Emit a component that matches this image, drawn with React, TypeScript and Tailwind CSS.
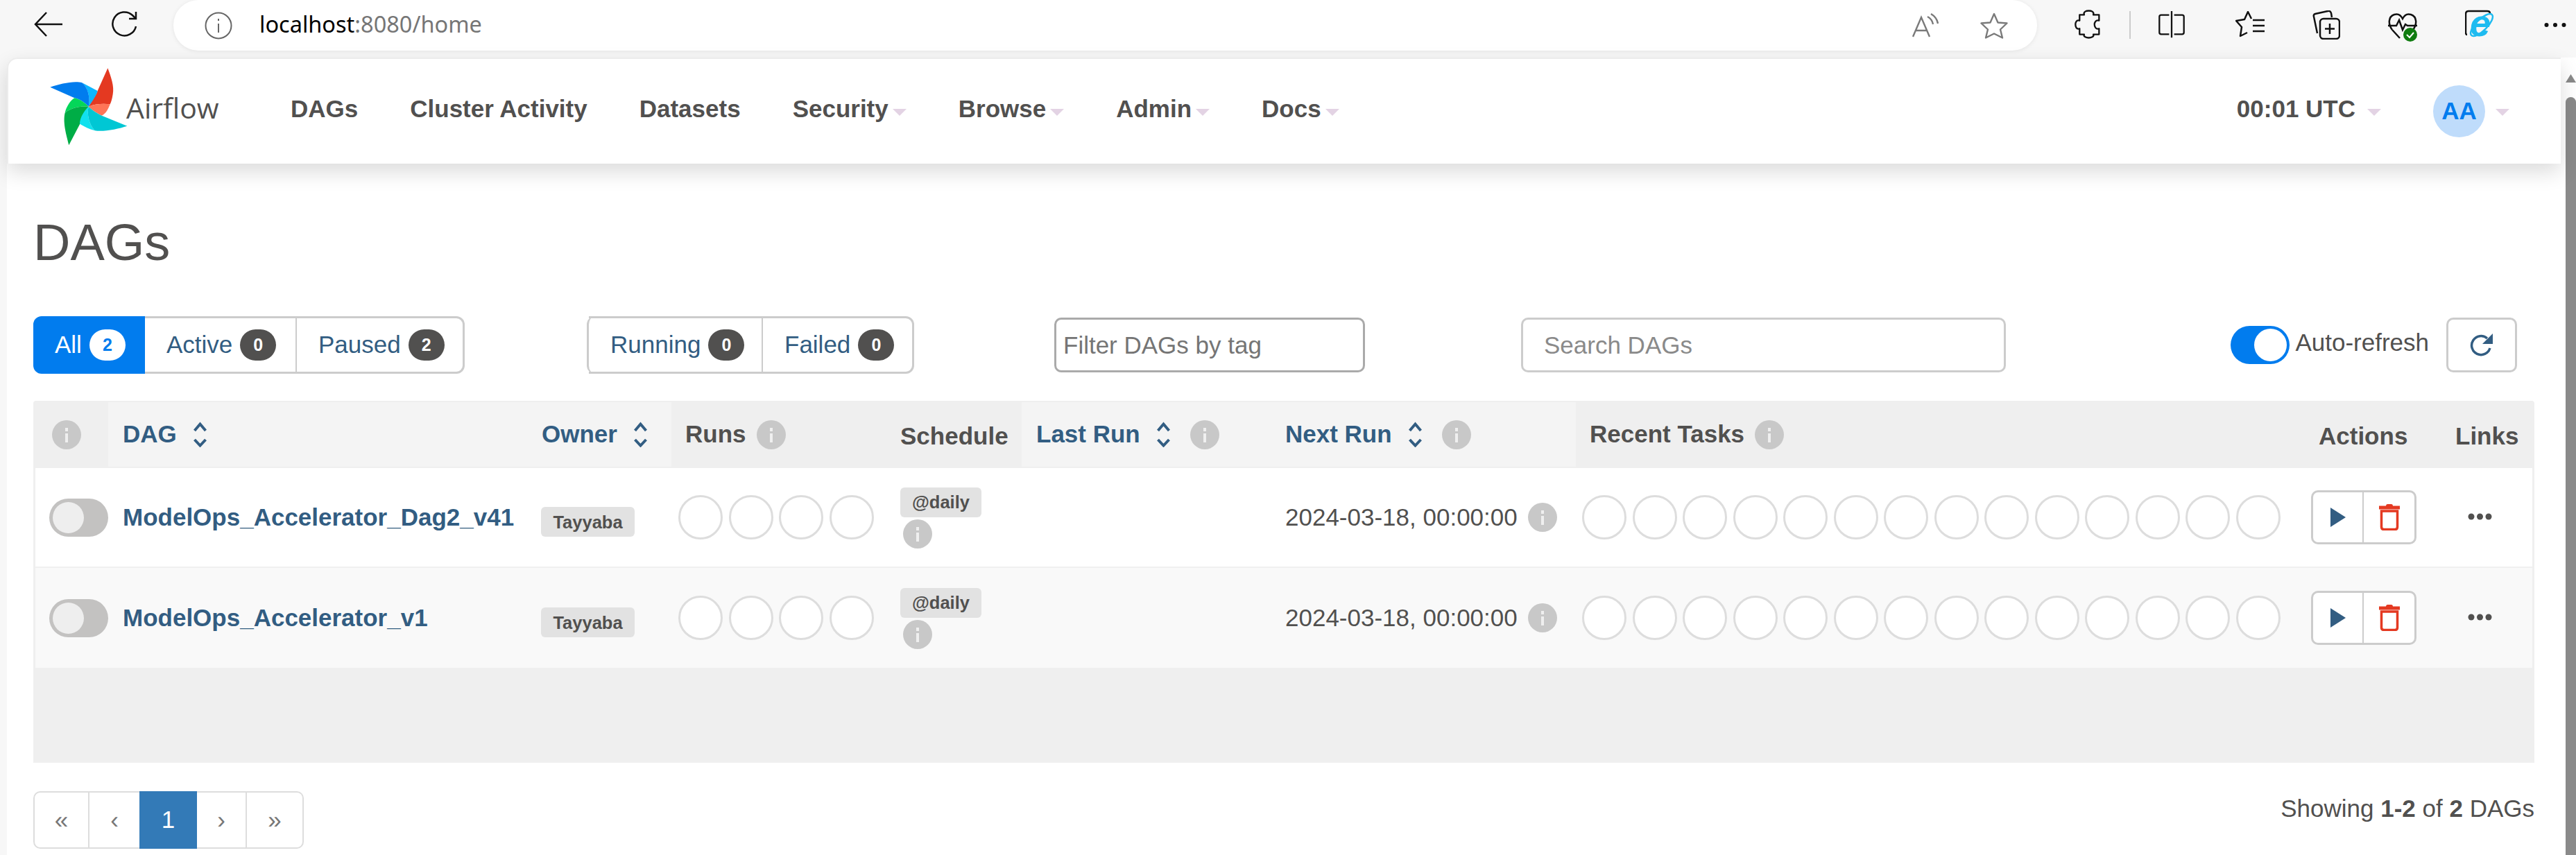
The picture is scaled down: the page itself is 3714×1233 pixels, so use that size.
import { ReactNode } from 'react';

const linkBlue = '#325d82';

// column widths, shared by the header and the rows
const col = {
  check: 'w-[105px]',
  dag: 'w-[604px]',
  owner: 'w-[208px]',
  runs: 'w-[310px]',
  schedule: 'w-[195px]',
  lastRun: 'w-[359px]',
  nextRun: 'w-[440px]',
  recent: 'w-[1051px]',
  actions: 'w-[197px]',
  links: 'w-[131px]',
};

const dags = [
  { name: 'ModelOps_Accelerator_Dag2_v41', rowClass: 'bg-white border-b-2 border-[#f0f0f0] h-[144px]' },
  { name: 'ModelOps_Accelerator_v1', rowClass: 'bg-[#f9f9f9] h-[144px]' },
];

function Caret({ className = '' }: { className?: string }) {
  return (
    <svg width="20" height="10" viewBox="0 0 20 10" className={className}>
      <polygon points="0,0 20,0 10,10" fill="#e3d3e4" />
    </svg>
  );
}

function InfoDot() {
  return (
    <svg width="42" height="42" viewBox="0 0 42 42" className="shrink-0">
      <circle cx="21" cy="21" r="21" fill="#c8c8c8" />
      <rect x="19" y="11" width="4" height="5" fill="#efefef" />
      <rect x="19" y="19" width="4" height="13" fill="#efefef" />
    </svg>
  );
}

function SortIcon() {
  return (
    <svg width="19" height="37" viewBox="0 0 19 37" fill="none" stroke={linkBlue} strokeWidth="4" className="shrink-0">
      <path d="M1.5 13 9.5 3.5l8 9.5" />
      <path d="M1.5 26l8 8.5 8-8.5" />
    </svg>
  );
}

function Logo() {
  return (
    <svg width="115" height="115" viewBox="210 45 345 345" className="shrink-0 mt-[-14px]">
      <path d="M383 218C400 190 420 160 422 150L466 52C480 90 495 130 488 165C485 185 480 200 476 208C450 205 415 205 383 218Z" fill="#e43921" />
      <path d="M383 218C415 205 450 205 476 208C470 225 458 250 440 257C425 250 400 235 383 218Z" fill="#ff7557" />
      <path d="M355 115L422 150C420 165 400 195 383 218C390 180 382 140 355 115Z" fill="#0cb6ff" />
      <path d="M217 134C260 120 320 105 355 115C380 135 392 180 383 218C365 200 345 185 322 181Z" fill="#017cee" />
      <path d="M322 181C345 185 365 200 383 218C355 215 310 220 281 245C285 225 300 195 322 181Z" fill="#04d659" />
      <path d="M281 245C310 220 355 215 383 218C370 240 350 270 345 295L298 385C290 350 270 290 281 245Z" fill="#00ad46" />
      <path d="M383 218C375 250 385 295 410 322C385 315 365 305 345 293C345 265 365 235 383 218Z" fill="#11e1ee" />
      <path d="M383 218C375 250 385 295 410 322C450 328 510 315 550 302L440 257C425 250 400 235 383 218Z" fill="#00c7d4" />
    </svg>
  );
}

function BrowserBar() {
  return (
    <div className="h-[83px] shrink-0 flex items-start pl-[49px]">
      <svg width="41" height="36" viewBox="0 0 41 36" fill="none" stroke="#111" strokeWidth="2.5" className="mt-[17px] shrink-0">
        <path d="M41 18H2M18 1 2 18l16 17" />
      </svg>
      <svg width="40" height="40" viewBox="0 0 40 40" fill="none" stroke="#111" strokeWidth="2.5" className="mt-[15px] ml-[70px] shrink-0">
        <path d="M36 23A17 17 0 1 1 31 7L36 12" />
        <path d="M36 2V12H26" />
      </svg>
      <div className="ml-[50px] w-[2687px] h-[73px] bg-white rounded-[36px] shadow-[0_1px_6px_rgba(0,0,0,0.08)] flex items-center pl-[45px] shrink-0">
        <svg width="40" height="40" viewBox="0 0 40 40" fill="none" stroke="#666" strokeWidth="2" className="shrink-0">
          <circle cx="20" cy="20" r="18.5" />
          <path d="M20 17V30M20 10V13" />
        </svg>
        <span className="ml-[39px] mt-[-3px] text-[32.5px] leading-none font-['Noto_Sans',sans-serif] text-black">
          localhost<span className="text-[#767676]">:8080/home</span>
        </span>
        <svg width="38" height="36" viewBox="0 0 38 36" fill="none" stroke="#7a7a7a" strokeWidth="2.4" className="ml-auto shrink-0">
          <path d="M1 34 13 6l12 28M5 25H21" />
          <path d="M22 5c4 2 7 6 8 11M27 1c5 3 9 8 10 14" />
        </svg>
        <svg width="40" height="38" viewBox="0 0 40 38" fill="none" stroke="#7a7a7a" strokeWidth="2.4" strokeLinejoin="round" className="ml-[60px] mr-[42px] shrink-0">
          <path d="M20 2l5.5 12.5L38.500 15.500 29 24.500 32 36.500 20 30.500 8 36.500 11 24.500 1.500 15.500 14.500 14.500Z" />
        </svg>
      </div>
      {/* extensions */}
      <svg width="37" height="42" viewBox="748 43 112 126" fill="none" stroke="#111" strokeWidth="7" strokeLinejoin="round" className="mt-[14px] ml-[54px] shrink-0">
        <path d="M770 65H790C785 50 800 47 810 47C820 47 835 50 830 65H855V90C840 85 835 100 835 107C835 115 840 130 855 125V150H830C835 160 820 165 810 165C800 165 785 160 790 150H770V125C755 130 752 115 752 107C752 100 755 85 770 90Z" />
      </svg>
      <div className="mt-[16px] ml-[42px] w-[2px] h-[40px] bg-[#cccccc] shrink-0" />
      <svg width="38" height="42" viewBox="1108 45 116 122" fill="none" stroke="#111" strokeWidth="7" className="mt-[14px] ml-[40px] shrink-0">
        <path d="M1155 65H1120Q1112 65 1112 73V142Q1112 150 1120 150H1155M1177 65H1212Q1220 65 1220 73V142Q1220 150 1212 150H1177M1166 48V165" />
      </svg>
      <svg width="42" height="38" viewBox="0 0 42 38" fill="none" stroke="#111" strokeWidth="2.500" strokeLinejoin="round" className="mt-[16px] ml-[73px] shrink-0">
        <path d="M23 11 18 1 13 12 1 14 9 23 7 36 17 31" />
        <path d="M25 13H42M25 21H42M25 29H42" />
      </svg>
      <svg width="41" height="42" viewBox="0 0 41 42" fill="none" stroke="#111" strokeWidth="2.500" className="mt-[15px] ml-[68px] shrink-0">
        <path d="M8 33 3 9Q2 6 5 5L23 1Q27 0 28 4L29 10" />
        <rect x="12" y="12" width="28" height="29" rx="5" />
        <path d="M26 19V34M19 26.500H33" />
      </svg>
      <svg width="42" height="42" viewBox="0 0 42 42" fill="none" className="mt-[18px] ml-[69px] shrink-0">
        <path d="M6 25C0 17 0 6 9 3C15 1 19 5 21 9C23 5 27 1 33 3C42 6 42 17 36 25L28 32" stroke="#111" strokeWidth="2.500" />
        <path d="M0 19H12L16 11 21 25 25 17 28 19H42M6 25 17 37" stroke="#111" strokeWidth="2.500" />
        <circle cx="32" cy="32" r="10" fill="#107c10" />
        <path d="M27 32l4 4 6-7" stroke="#fff" strokeWidth="2" />
      </svg>
      <svg width="44" height="70" viewBox="0 -14 44 70" fill="none" className="ml-[69px] shrink-0">
        <path d="M3 36Q1 36 1 33V6Q1 2 5 2H32Q36 2 36 5" stroke="#111" strokeWidth="2.500" />
        <ellipse cx="24" cy="22" rx="21" ry="8" transform="rotate(-45 24 22)" stroke="#1ebbf0" strokeWidth="2.500" />
        <text x="7" y="38" fontSize="54" fontWeight="700" fontStyle="italic" fill="#1ebbf0" fontFamily="Liberation Sans, sans-serif">e</text>
      </svg>
      <svg width="32" height="8" viewBox="0 0 32 8" fill="#111" className="mt-[32px] ml-[70px] shrink-0">
        <circle cx="3.500" cy="4" r="3" />
        <circle cx="16" cy="4" r="3" />
        <circle cx="28.500" cy="4" r="3" />
      </svg>
    </div>
  );
}

function NavItem({ label, caret }: { label: string; caret?: boolean }) {
  return (
    <span className="flex items-center font-bold mb-[6px]">
      {label}
      {caret && <Caret className="ml-[6px] mt-[8px]" />}
    </span>
  );
}

function TopNav() {
  return (
    <nav className="relative z-10 h-[153px] mr-[7px] shrink-0 bg-white rounded-tl-[15px] border-t-2 border-l-2 border-[#ececec] shadow-[0_12px_30px_rgba(0,0,0,0.14)] flex items-center pl-[58px] pr-[74px] text-[35px] text-[#51504f]">
      <Logo />
      <span className="ml-[-3px] mt-[-10px] w-[135px] text-[41px] leading-none whitespace-nowrap font-['Open_Sans',sans-serif]">Airflow</span>
      <div className="ml-[102px] flex items-center gap-[75px]">
        <NavItem label="DAGs" />
        <NavItem label="Cluster Activity" />
        <NavItem label="Datasets" />
        <NavItem label="Security" caret />
        <NavItem label="Browse" caret />
        <NavItem label="Admin" caret />
        <NavItem label="Docs" caret />
      </div>
      <div className="ml-auto flex items-center">
        <NavItem label="00:01 UTC" />
        <Caret className="ml-[17px] mt-[3px]" />
        <span className="ml-[75px] w-[75px] h-[75px] rounded-full bg-[#bfdcfb] flex items-center justify-center text-[#017cee] font-bold">AA</span>
        <Caret className="ml-[15px] mt-[3px]" />
      </div>
    </nav>
  );
}

function FilterSegment({ label, count, width, active, last }: { label: string; count: number; width: string; active?: boolean; last?: boolean }) {
  const box = active ? 'bg-[#017cee] text-white rounded-l-[12px]' : 'text-[#325d82] border-y-[3px] border-[#cccccc]';
  return (
    <div className={`${width} h-[83px] flex items-center pl-[31px] gap-[11px] ${box} ${last ? 'border-r-[3px] rounded-r-[12px]' : active ? '' : 'border-r-2'}`}>
      <span>{label}</span>
      <span className={`w-[52px] h-[45px] rounded-full flex items-center justify-center text-[25px] font-bold ${active ? 'bg-white text-[#017cee]' : 'bg-[#51504f] text-white'}`}>
        {count}
      </span>
    </div>
  );
}

function Toolbar() {
  return (
    <div className="flex items-center h-[83px] text-[35px] pr-[25px]">
      <div className="flex">
        <FilterSegment label="All" count={2} width="w-[161px]" active />
        <FilterSegment label="Active" count={0} width="w-[219px]" />
        <FilterSegment label="Paused" count={2} width="w-[242px]" last />
      </div>
      <div className="flex ml-[176px] border-l-[3px] border-[#cccccc] rounded-l-[12px]">
        <FilterSegment label="Running" count={0} width="w-[251px]" />
        <FilterSegment label="Failed" count={0} width="w-[218px]" last />
      </div>
      <input
        placeholder="Filter DAGs by tag"
        className="ml-[202px] w-[448px] h-[79px] border-[3px] border-[#aaaaaa] rounded-[10px] pl-[10px] outline-none bg-white placeholder:text-[#757575]"
      />
      <input
        placeholder="Search DAGs"
        className="ml-[225px] w-[699px] h-[79px] border-[3px] border-[#cccccc] rounded-[10px] pl-[30px] outline-none bg-white placeholder:text-[#8a8a8a]"
      />
      <div className="ml-auto flex items-center">
        <div className="w-[85px] h-[55px] rounded-full bg-[#017cee] flex items-center justify-end pr-[4px]">
          <span className="w-[47px] h-[47px] rounded-full bg-white" />
        </div>
        <span className="ml-[8px] text-[#51504f] mt-[-6px]">Auto-refresh</span>
        <button className="ml-[25px] w-[102px] h-[79px] border-[3px] border-[#cccccc] rounded-[10px] bg-white flex items-center justify-center">
          <svg width="34" height="34" viewBox="0 0 34 34" fill="none">
            <path d="M29 21A13.500 13.500 0 1 1 25 7" stroke={linkBlue} strokeWidth="3.500" />
            <polygon points="33,0 33,15 18,15" fill={linkBlue} />
          </svg>
        </button>
      </div>
    </div>
  );
}

function SortHead({ label, width, info }: { label: string; width: string; info?: boolean }) {
  return (
    <div className={`${width} h-[93px] mt-[2px] bg-[#f4f4f4] flex items-center pl-[21px] text-[#325d82]`}>
      {label}
      <span className="ml-[24px] flex"><SortIcon /></span>
      {info && <span className="ml-[29px] flex"><InfoDot /></span>}
    </div>
  );
}

function PlainHead({ label, width, info }: { label: string; width: string; info?: boolean }) {
  return (
    <div className={`${width} flex items-center pl-[20px] ${info ? '' : 'pt-[5px]'}`}>
      {label}
      {info && <span className="ml-[15px] flex"><InfoDot /></span>}
    </div>
  );
}

function RunCircles({ count }: { count: number }) {
  return (
    <div className="flex gap-[8.5px]">
      {Array.from({ length: count }).map((_, i) => (
        <span key={i} className="w-[64px] h-[64px] rounded-full border-[3px] border-[#dddddd] bg-white shrink-0" />
      ))}
    </div>
  );
}

function DagRow({ name, rowClass }: { name: string; rowClass: string }) {
  return (
    <div className={`flex items-center ${rowClass}`}>
      <div className={`${col.check} pl-[20px]`}>
        <div className="w-[85px] h-[55px] rounded-full bg-[#c3c2c1] flex items-center pl-[5px]">
          <span className="w-[45px] h-[45px] rounded-full bg-[#eeeeee]" />
        </div>
      </div>
      <div className={`${col.dag} pl-[21px] font-bold text-[#325d82]`}>{name}</div>
      <div className={`${col.owner} pl-[20px] pt-[8px]`}>
        <span className="inline-flex items-center justify-center w-[135px] h-[43px] rounded-[6px] bg-[#e2e2e2] text-[25.5px] font-bold">Tayyaba</span>
      </div>
      <div className={`${col.runs} pl-[10px]`}>
        <RunCircles count={4} />
      </div>
      <div className={`${col.schedule} pl-[20px] pt-[1px] flex flex-col items-start gap-[3px]`}>
        <span className="inline-flex items-center justify-center w-[117px] h-[43px] rounded-[6px] bg-[#e2e2e2] text-[25.5px] font-bold">@daily</span>
        <span className="ml-[4px] flex"><InfoDot /></span>
      </div>
      <div className={col.lastRun} />
      <div className={`${col.nextRun} pl-[21px] flex items-center gap-[15px]`}>
        2024-03-18, 00:00:00
        <InfoDot />
      </div>
      <div className={`${col.recent} pl-[9px]`}>
        <RunCircles count={14} />
      </div>
      <div className={`${col.actions} pl-[9px]`}>
        <div className="w-[152px] h-[78px] flex rounded-[10px] border-[3px] border-[#cccccc] bg-white">
          <span className="w-[73px] border-r-2 border-[#cccccc] flex items-center justify-center">
            <svg width="22" height="28" viewBox="0 0 22 28"><polygon points="0,0 22,14 0,28" fill="#325d82" /></svg>
          </span>
          <span className="flex-1 flex items-center justify-center">
            <svg width="30" height="38" viewBox="0 0 30 38" fill="none">
              <path d="M10 2.500Q10 0 12 0H18Q20 0 20 2.500H30V7.500H0V2.500Z" fill="#e43921" />
              <path d="M3.500 10V33Q3.500 36.500 7 36.500H23Q26.500 36.500 26.500 33V10H3.500Z" stroke="#e43921" strokeWidth="3.500" />
            </svg>
          </span>
        </div>
      </div>
      <div className={`${col.links} pl-[38px]`}>
        <svg width="35" height="10" viewBox="0 0 35 10" fill="#51504f" className="mt-[-3px]">
          <circle cx="5" cy="5" r="4.500" />
          <circle cx="17.500" cy="5" r="4.500" />
          <circle cx="30" cy="5" r="4.500" />
        </svg>
      </div>
    </div>
  );
}

function DagTable() {
  return (
    <div className="mt-[39px] h-[522px] bg-[#efefef] border-x-[3px] border-[#efefef] rounded-t-[4px] text-[35px] text-[#51504f]">
      <div className="flex h-[97px] font-bold">
        <div className={`${col.check} flex items-center pl-[24px]`}><InfoDot /></div>
        <SortHead label="DAG" width={col.dag} />
        <SortHead label="Owner" width={col.owner} />
        <PlainHead label="Runs" width={col.runs} info />
        <PlainHead label="Schedule" width={col.schedule} />
        <SortHead label="Last Run" width={col.lastRun} info />
        <SortHead label="Next Run" width={col.nextRun} info />
        <PlainHead label="Recent Tasks" width={col.recent} info />
        <PlainHead label="Actions" width={col.actions} />
        <PlainHead label="Links" width={col.links} />
      </div>
      {dags.map((d) => (
        <DagRow key={d.name} name={d.name} rowClass={d.rowClass} />
      ))}
    </div>
  );
}

function PageCell({ children, className = '' }: { children: ReactNode; className?: string }) {
  return <span className={`h-[83px] flex items-center justify-center ${className}`}>{children}</span>;
}

function Pager() {
  return (
    <div className="flex text-[35px] text-[#777777]">
      <PageCell className="w-[81px] border-2 border-[#dddddd] rounded-l-[10px]">«</PageCell>
      <PageCell className="w-[72px] border-y-2 border-[#dddddd]">‹</PageCell>
      <PageCell className="w-[83px] bg-[#337ab7] text-white">1</PageCell>
      <PageCell className="w-[72px] border-y-2 border-r-2 border-[#dddddd]">›</PageCell>
      <PageCell className="w-[82px] border-y-2 border-r-2 border-[#dddddd] rounded-r-[10px]">»</PageCell>
    </div>
  );
}

export default function App() {
  return (
    <div className="w-[3714px] h-[1233px] overflow-hidden flex flex-col bg-[#f7f7f7] font-['Liberation_Sans',sans-serif]">
      <BrowserBar />
      <div className="flex-1 flex pl-[10px] min-h-0">
        <div className="flex-1 min-w-0 bg-white flex flex-col rounded-tl-[15px]">
          <TopNav />
          <main className="pl-[38px] pr-[45px] text-[#51504f]">
            <h1 className="h-[220px] pt-[77px] text-[74px] leading-[74px] font-normal">DAGs</h1>
            <Toolbar />
            <DagTable />
            <div className="mt-[41px] flex items-start justify-between text-[35px]">
              <Pager />
              <span className="leading-[50px]">
                Showing <b>1-2</b> of <b>2</b> DAGs
              </span>
            </div>
          </main>
        </div>
        {/* page scrollbar */}
        <div className="w-[15px] shrink-0 bg-white flex flex-col">
          <svg width="15" height="12" viewBox="0 0 15 12" className="mt-[24px] shrink-0"><polygon points="7.500,0 15,12 0,12" fill="#8a8a8a" /></svg>
          <div className="mt-[21px] flex-1 bg-[#8a8a8a] rounded-t-[8px]" />
        </div>
      </div>
    </div>
  );
}
